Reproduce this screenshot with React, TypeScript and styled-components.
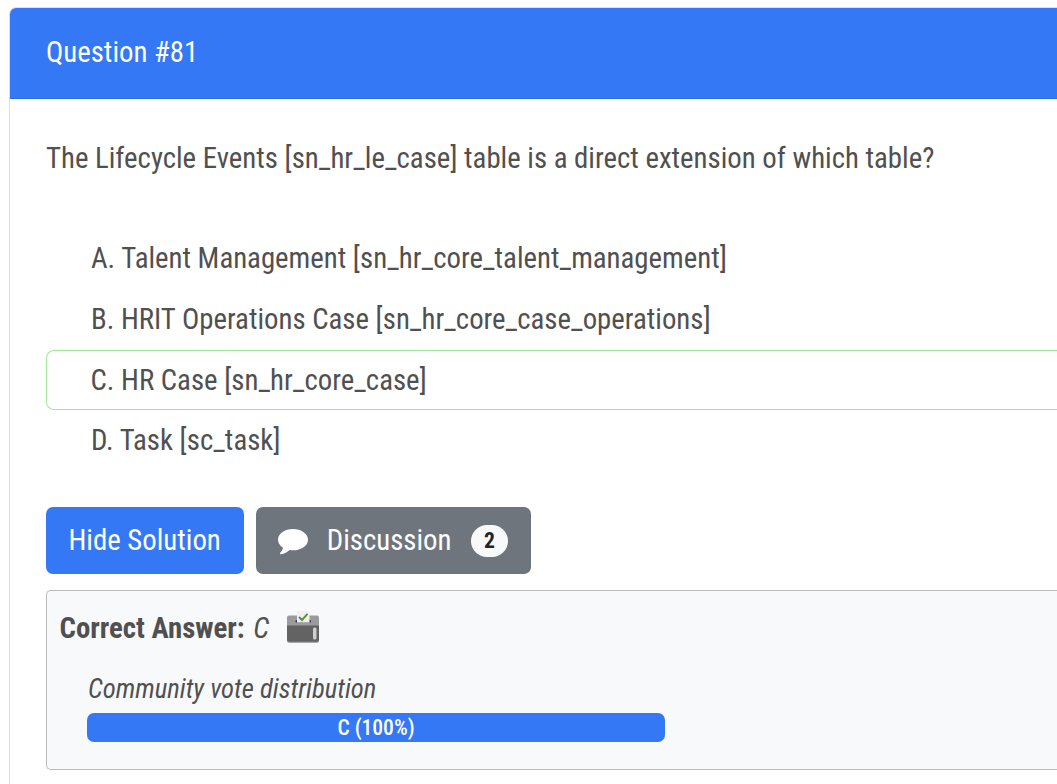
import React from 'react';
import styled, { createGlobalStyle } from 'styled-components';

const GlobalStyle = createGlobalStyle`
  *, *::before, *::after { box-sizing: border-box; }
  body {
    margin: 0;
    background: #fff;
    color: #505050;
    font-family: 'Roboto Condensed', Roboto, sans-serif;
    font-size: 28.8px;
    line-height: 43.2px;
  }
`;

const Page = styled.main`
  height: 100vh;
  padding: 7px 0 0 9px;
`;

const Card = styled.article`
  height: 100%;
  border: 1px solid #dfdfdf;
  border-width: 1px 0 0 1px;
  border-radius: 7px 0 0 0;
  overflow: hidden;
`;

const CardHeader = styled.header`
  height: 91px;
  padding: 23px 36px 0;
  background: #3478f6;
  border-bottom: 1px solid #2f6cdd;
  color: #fff;
`;

const CardBody = styled.div`
  padding: 38px 0 0 36px;
`;

const Prompt = styled.p`
  margin: 0;
`;

const Options = styled.ul`
  list-style: none;
  margin: 48px 0 0;
  padding: 0;
`;

const Option = styled.li<{ $correct?: boolean }>`
  height: 60px;
  margin-bottom: 1px;
  padding: 8px 44px;
  border: 1px solid ${p => (p.$correct ? '#a3e897' : 'transparent')};
  border-right: 0;
  border-radius: 8px 0 0 8px;
  &:nth-child(3) { margin-bottom: 0; padding-left: 43.5px; }
`;

const Actions = styled.div`
  display: flex;
  gap: 12px;
  margin-top: 37px;
`;

const Button = styled.button<{ $tone: string }>`
  display: flex;
  align-items: center;
  height: 67px;
  padding: 0 23.5px 0 22.5px;
  border: 0;
  border-radius: 7px;
  background: ${p => p.$tone};
  color: #fff;
  font: inherit;
`;

const CommentGlyph = styled.svg`
  width: 30px;
  height: 26px;
  margin: 2px 19px 0 -1px;
`;

const Badge = styled.span`
  width: 37px;
  height: 32px;
  margin-left: 19.5px;
  margin-right: -.5px;
  border-radius: 16px;
  background: #f8f9fa;
  color: #212529;
  font-size: 21.6px;
  font-weight: 700;
  line-height: 32px;
  text-align: center;
`;

const Solution = styled.section`
  height: 180px;
  margin-top: 16px;
  padding: 16px 0 0 12.5px;
  border: 1px solid #b9babb;
  border-right: 0;
  border-radius: 5px 0 0 5px;
  background: #f8f9fb;
`;

const AnswerLine = styled.div`
  display: flex;
  align-items: center;
`;

const Answer = styled.em`
  margin-left: 8.5px;
`;

const BallotGlyph = styled.svg`
  width: 32px;
  height: 32px;
  margin: 0 0 4px 17.5px;
`;

const Votes = styled.div`
  width: 578px;
  margin: 21px 0 0 27.5px;
`;

const VotesTitle = styled.div`
  height: 40px;
  padding-left: 1px;
  line-height: 37px;
  font-size: 26.7px;
  font-style: italic;
`;

const VoteBar = styled.div`
  height: 29px;
  margin-top: 2px;
  border-radius: 7px;
  background: #3478f6;
  color: #fff;
  font-size: 21.6px;
  font-weight: 500;
  line-height: 29px;
  text-align: center;
`;

const options = [
  { text: 'A. Talent Management [sn_hr_core_talent_management]' },
  { text: 'B. HRIT Operations Case [sn_hr_core_case_operations]' },
  { text: 'C. HR Case [sn_hr_core_case]', correct: true },
  { text: 'D. Task [sc_task]' },
];

export default function App() {
  return (
    <>
      <GlobalStyle />
      <Page>
        <Card>
          <CardHeader>Question #81</CardHeader>
          <CardBody>
            <Prompt>The Lifecycle Events [sn_hr_le_case] table is a direct extension of which table?</Prompt>
            <Options>
              {options.map(o => (
                <Option key={o.text} $correct={o.correct}>{o.text}</Option>
              ))}
            </Options>
            <Actions>
              <Button $tone="#3478f6">Hide Solution</Button>
              <Button $tone="#6e757c">
                <CommentGlyph viewBox="0 0 30 26" fill="#fff">
                  <path d="M15 0C6.700 0 0 4.700 0 10.700c0 3.300 2 6.100 5.100 8-.4 1.900-1.300 3.300-2.700 4.700-.8.8-.4 1.900.8 1.800 3.300-.4 6-1.900 8.300-4.200 1.100.2 2.300.3 3.500.3 8.300 0 15-4.700 15-10.600S23.300 0 15 0z" />
                </CommentGlyph>
                Discussion
                <Badge>2</Badge>
              </Button>
            </Actions>
            <Solution>
              <AnswerLine>
                <strong>Correct Answer:</strong>
                <Answer>C</Answer>
                <BallotGlyph viewBox="0 0 32 32">
                  <path d="M2 4.500h28q2 0 2 2V15H0V6.500q0-2 2-2z" fill="#9b9b9b" />
                  <path d="M0 14.500h32V29.500q0 2-2 2H2q-2 0-2-2z" fill="#636363" />
                  <path d="M.3 29.500q0 1.700 1.700 1.700h28q1.700 0 1.700-1.700" fill="none" stroke="#a5a5a5" strokeWidth=".8" />
                  <rect x="8.500" y="9" width="15.500" height="2.500" rx="1.200" fill="#3e354b" />
                  <path d="M11 0h10.500q1 0 1 1v10.500H10V1q0-1 1-1z" fill="#f1eef6" />
                  <path d="m12 6 3 3 5.500-6.200" fill="none" stroke="#4f9632" strokeWidth="1.900" />
                  <rect x="26" y="16.500" width="3.500" height="12" rx="1.500" fill="#d0d0d0" />
                </BallotGlyph>
              </AnswerLine>
              <Votes>
                <VotesTitle>Community vote distribution</VotesTitle>
                <VoteBar>C (100%)</VoteBar>
              </Votes>
            </Solution>
          </CardBody>
        </Card>
      </Page>
    </>
  );
}
